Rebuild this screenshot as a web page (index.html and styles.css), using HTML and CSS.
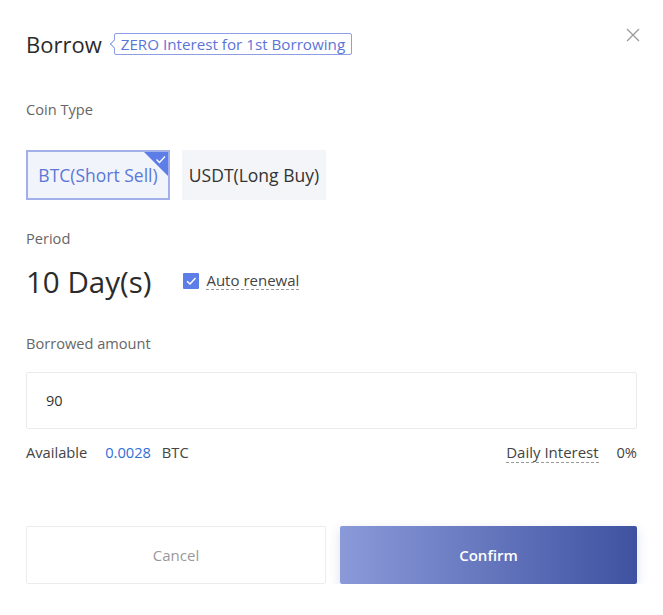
FILE: index.html
```html
<!DOCTYPE html>
<html>
<head>
<title>Borrow</title>
<link rel="stylesheet" href="styles.css">
</head>
<body>
  <div class="modal">
    <div class="modal-header">
      <div class="title-wrap">
        <h1 class="title">Borrow</h1>
        <span class="promo-tag">ZERO Interest for 1st Borrowing</span>
      </div>
      <button class="close-btn" aria-label="Close">
        <svg width="14" height="14" viewBox="0 0 14 14"><path d="M1 1L13 13M13 1L1 13" stroke="#9a9a9a" stroke-width="1.3" fill="none"/></svg>
      </button>
    </div>

    <div class="field-label coin-label">Coin Type</div>
    <div class="coin-options">
      <div class="coin-option selected">
        BTC(Short Sell)
        <svg class="corner-check" width="24" height="24" viewBox="0 0 24 24"><path d="M0 0H24V24Z" fill="#5d7ee6"/><path d="M12.5 7.5L15.5 10.5L21 4.5" stroke="#fff" stroke-width="1.3" fill="none"/></svg>
      </div>
      <div class="coin-option">USDT(Long Buy)</div>
    </div>

    <div class="field-label period-label">Period</div>
    <div class="period-row">
      <span class="period-value">10 Day(s)</span>
      <label class="renew">
        <span class="checkbox">
          <svg width="16" height="16" viewBox="0 0 16 16"><path d="M4 8.2L7 11L12.5 5" stroke="#fff" stroke-width="1.4" fill="none"/></svg>
        </span>
        <span class="dashed">Auto renewal</span>
      </label>
    </div>

    <div class="field-label amount-label">Borrowed amount</div>
    <div class="amount-input">90</div>

    <div class="info-row">
      <div class="available">
        <span>Available</span>
        <span class="avail-value">0.0028</span>
        <span class="avail-unit">BTC</span>
      </div>
      <div class="interest">
        <span class="dashed">Daily Interest</span>
        <span>0%</span>
      </div>
    </div>

    <div class="actions">
      <button class="btn btn-cancel">Cancel</button>
      <button class="btn btn-confirm">Confirm</button>
    </div>
  </div>
</body>
</html>
```

FILE: styles.css
```css
body {
  margin: 0;
  background-color: #fff;
  font-family: "Open Sans", "Noto Sans", sans-serif;
  color: #333;
}

.modal {
  width: 611px;
  padding: 30px 26px 0 26px;
}

.modal-header {
  display: flex;
  justify-content: space-between;
  align-items: flex-start;
}

.title-wrap {
  display: flex;
  align-items: center;
}

.title {
  margin: 0;
  font-size: 22px;
  font-weight: 400;
  line-height: 28px;
  color: #2b2b2b;
}

.promo-tag {
  position: relative;
  margin-left: 12px;
  padding: 0 6px;
  height: 20px;
  line-height: 20px;
  font-size: 15.2px;
  color: #5c74d8;
  border: 1px solid #8d9de6;
  border-radius: 2px;
}

.promo-tag::before {
  content: "";
  position: absolute;
  left: -4px;
  top: 7px;
  width: 5px;
  height: 5px;
  background: #fff;
  border-left: 1px solid #8d9de6;
  border-bottom: 1px solid #8d9de6;
  transform: rotate(45deg);
}

.close-btn {
  margin-top: -2px;
  margin-right: -3px;
  padding: 0;
  border: none;
  background: none;
  cursor: pointer;
  line-height: 0;
}

.field-label {
  font-size: 14.6px;
  line-height: 20px;
  color: #666;
}

.coin-label {
  margin-top: 41px;
}

.coin-options {
  display: flex;
  gap: 12px;
  margin-top: 31px;
}

.coin-option {
  position: relative;
  width: 144px;
  height: 50px;
  box-sizing: border-box;
  display: flex;
  align-items: center;
  justify-content: center;
  font-size: 17.5px;
  background-color: #f4f5f8;
  color: #333;
  overflow: hidden;
  white-space: nowrap;
}

.coin-option.selected {
  border: 2px solid #a2afe9;
  background-color: #f2f4fb;
  color: #5b78d6;
}

.corner-check {
  position: absolute;
  top: 0;
  right: 0;
}

.period-label {
  margin-top: 28px;
}

.period-row {
  display: flex;
  align-items: center;
  margin-top: 14px;
  height: 40px;
}

.period-value {
  font-size: 29.5px;
  line-height: 40px;
  color: #2b2b2b;
}

.renew {
  display: flex;
  align-items: center;
  margin-left: 32px;
  margin-top: -3px;
  font-size: 15px;
  color: #444;
}

.checkbox {
  width: 16px;
  height: 16px;
  background-color: #5d7ee6;
  border-radius: 1px;
  margin-right: 7px;
  line-height: 0;
}

.dashed {
  border-bottom: 1px dashed #999;
  line-height: 18px;
}

.amount-label {
  margin-top: 31px;
}

.amount-input {
  margin-top: 19px;
  height: 57px;
  box-sizing: border-box;
  border: 1px solid #ebebeb;
  border-radius: 2px;
  padding-left: 19px;
  display: flex;
  align-items: center;
  font-size: 14.5px;
  color: #333;
}

.info-row {
  display: flex;
  justify-content: space-between;
  align-items: center;
  margin-top: 13px;
  height: 20px;
  font-size: 14.7px;
  color: #444;
}

.avail-value {
  margin-left: 14px;
  color: #2f6fd8;
}

.avail-unit {
  margin-left: 7px;
}

.interest .dashed {
  font-size: 15px;
  margin-right: 14px;
}

.actions {
  display: flex;
  gap: 14px;
  margin-top: 64px;
}

.btn {
  height: 58px;
  font-family: inherit;
  font-size: 15px;
  border-radius: 2px;
  cursor: pointer;
}

.btn-cancel {
  width: 300px;
  background: #fff;
  color: #999;
  border: 1px solid #ececec;
}

.btn-confirm {
  flex: 1;
  border: none;
  color: #fff;
  font-weight: 600;
  background: linear-gradient(to right, #8a9ad9, #3f52a1);
  box-shadow: 0 4px 12px rgba(63, 82, 161, 0.18);
}
```
